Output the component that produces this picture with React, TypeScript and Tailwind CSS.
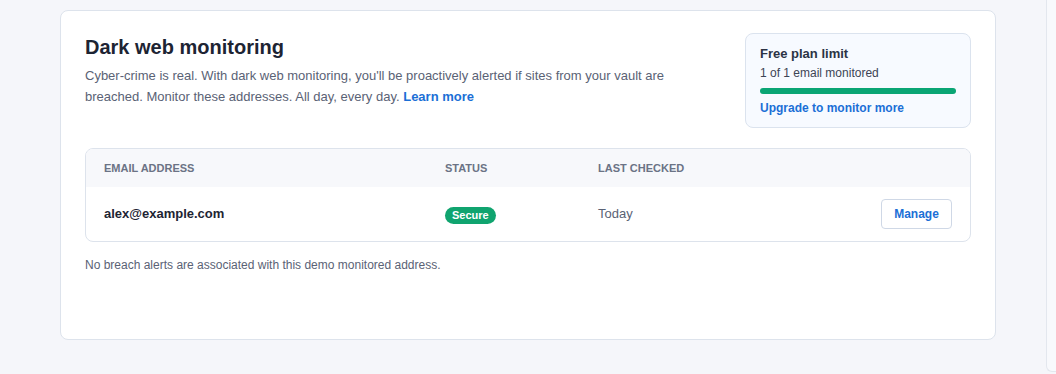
import React from "react";

const rows = [{ email: "alex@example.com", status: "Secure", checked: "Today" }];

export default function App() {
    return (
        <div
            className="w-[1056px] h-[374px] overflow-hidden bg-[#f5f6fa] flex"
            style={{ fontFamily: '"Liberation Sans", Arial, sans-serif' }}
        >
            <main className="pl-[60px] pt-[10px] shrink-0">
                <section className="w-[936px] h-[330px] bg-white border border-[#dde3ec] rounded-lg px-6 pt-6">
                    <div className="flex justify-between gap-6">
                        <div className="max-w-[620px]">
                            <h1 className="text-[20px] leading-[24px] font-bold text-[#1d2433]">Dark web monitoring</h1>
                            <p className="mt-[6px] text-[13px] leading-[21px] text-[#5a6275]">
                                Cyber-crime is real. With dark web monitoring, you'll be proactively alerted if sites from your vault are breached. Monitor these addresses. All day, every day.{" "}
                                <span className="font-bold text-[#1b6fd6]">Learn more</span>
                            </p>
                        </div>
                        <div className="w-[226px] h-[95px] shrink-0 -mt-[2px] rounded-lg border border-[#dbe3ee] bg-[#f7faff] px-[14px] pt-[12px]">
                            <p className="text-[13px] leading-[16px] font-bold text-[#2b3344]">Free plan limit</p>
                            <p className="mt-[4px] text-[12px] leading-[15px] text-[#3c4455]">1 of 1 email monitored</p>
                            <div className="mt-[7px] h-[6px] rounded-full bg-[#0aa574]" />
                            <p className="mt-[7px] text-[12px] leading-[15px] font-bold text-[#1b6fd6]">Upgrade to monitor more</p>
                        </div>
                    </div>

                    <div className="mt-[20px] border border-[#dde3ec] rounded-lg overflow-hidden">
                        <div className="grid grid-cols-[359px_153px_1fr] bg-[#f7f8fb] h-[38px] items-center text-[11px] font-bold uppercase text-[#6b7385]">
                            <span className="pl-[18px]">Email address</span>
                            <span>Status</span>
                            <span>Last checked</span>
                        </div>
                        {rows.map((row) => (
                            <div key={row.email} className="grid grid-cols-[359px_153px_1fr] h-[54px] items-center">
                                <span className="pl-[18px] text-[13px] font-bold text-[#1d2433]">{row.email}</span>
                                <span>
                                    <span className="inline-block rounded-full bg-[#10a46f] px-[7px] h-[17px] leading-[17px] text-[11px] font-bold text-white">
                                        {row.status}
                                    </span>
                                </span>
                                <div className="flex items-center justify-between pr-[18px]">
                                    <span className="text-[13px] text-[#5a6275]">{row.checked}</span>
                                    <button className="h-[30px] w-[71px] rounded border border-[#cfd8e6] bg-white text-[12px] font-bold text-[#1b6fd6]">
                                        Manage
                                    </button>
                                </div>
                            </div>
                        ))}
                    </div>

                    <p className="mt-[16px] text-[12px] leading-[15px] text-[#5a6275]">
                        No breach alerts are associated with this demo monitored address.
                    </p>
                </section>
            </main>
            <aside className="ml-[50px] flex-1 min-w-0 h-[372px] bg-[#f8f9fc] border-l border-b border-[#e3e7ee] rounded-bl-md" />
        </div>
    );
}
